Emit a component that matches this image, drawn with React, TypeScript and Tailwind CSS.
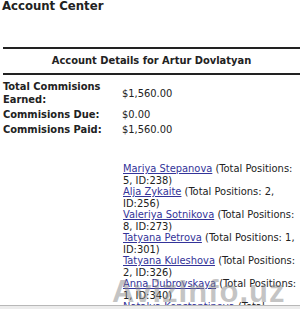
const referrals = [
  { name: 'Mariya Stepanova', positions: 5, id: 238 },
  { name: 'Alja Zykaite', positions: 2, id: 256 },
  { name: 'Valeriya Sotnikova', positions: 8, id: 273 },
  { name: 'Tatyana Petrova', positions: 1, id: 301 },
  { name: 'Tatyana Kuleshova', positions: 2, id: 326 },
  { name: 'Anna Dubrovskaya', positions: 1, id: 340 },
  { name: 'Natalya Konstantinova', positions: 3, id: 352 },
];

export default function App() {
  return (
    <div className="w-[300px] h-[309px] bg-white flex flex-col overflow-hidden relative font-['DejaVu_Sans_Condensed','DejaVu_Sans',sans-serif] text-[#222]">
      <div className="flex-1 min-h-0 overflow-hidden">
        {/* Page title */}
        <h1 className="text-[13px] font-bold leading-[14px] pl-[2px] -mt-[1px]">Account Center</h1>

        {/* Header band */}
        <div className="ml-[3px] mt-[34px] border-t-2 border-b-2 border-[#222] h-[28px] flex items-center justify-center text-[11px] font-bold">
          Account Details for Artur Dovlatyan
        </div>

        {/* Totals */}
        <div className="grid grid-cols-[119px_1fr] pl-[3px] mt-[5px] text-[11px] leading-[13px] gap-y-[2px]">
          <div className="font-bold">Total Commisions Earned:</div>
          <div className="self-center">$1,560.00</div>
          <div className="font-bold">Commisions Due:</div>
          <div>$0.00</div>
          <div className="font-bold">Commisions Paid:</div>
          <div>$1,560.00</div>
        </div>

        {/* Referral list */}
        <div className="ml-[123px] mt-[27px] w-[176px] text-[11px] leading-[11.5px]">
          {referrals.map((r) => (
            <div key={r.id}>
              <a className="text-[#333399] underline">{r.name}</a> (Total Positions: {r.positions}, ID:{r.id})
            </div>
          ))}
        </div>
      </div>

      {/* Bottom bar */}
      <div className="h-[4px] border-t border-[#b8b8b8] bg-[#ececec] shrink-0" />

      {/* Watermark */}
      <span className="absolute left-[112px] top-[276px] text-[31px] font-bold leading-none tracking-[1px] text-[#8a8a8a]/50 font-['Liberation_Sans',sans-serif] pointer-events-none">
        AvizInfo.uz
      </span>
    </div>
  );
}
